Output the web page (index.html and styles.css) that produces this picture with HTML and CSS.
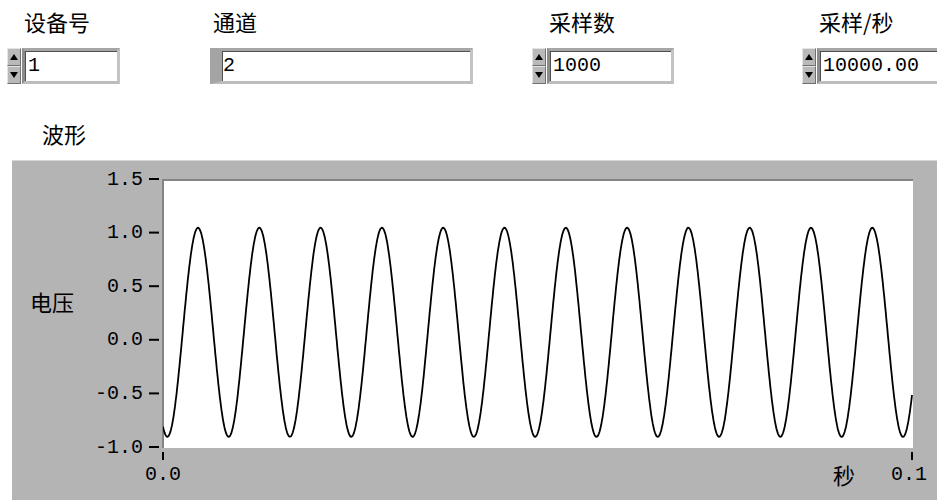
FILE: index.html
```html
<!DOCTYPE html>
<html lang="zh-CN">
<head>
  <meta charset="UTF-8" />
  <title>波形采集</title>
  <link rel="stylesheet" href="styles.css">
</head>
<body>
  <div class="controls">
    <div class="ctl">
      <div class="ctl-label num">设备号</div>
      <div class="ctl-row">
        <div class="spin"><span class="up"></span><span class="down"></span></div>
        <div class="field w-dev">1</div>
      </div>
    </div>
    <div class="ctl">
      <div class="ctl-label">通道</div>
      <div class="ctl-row">
        <div class="field chan">2</div>
      </div>
    </div>
    <div class="ctl">
      <div class="ctl-label num">采样数</div>
      <div class="ctl-row">
        <div class="spin"><span class="up"></span><span class="down"></span></div>
        <div class="field w-count">1000</div>
      </div>
    </div>
    <div class="ctl">
      <div class="ctl-label num">采样/秒</div>
      <div class="ctl-row">
        <div class="spin"><span class="up"></span><span class="down"></span></div>
        <div class="field w-rate">10000.00</div>
      </div>
    </div>
  </div>

  <div class="graph-label">波形</div>
  <div class="graph">
    <svg width="925" height="340" viewBox="0 0 925 340">
      <defs>
        <clipPath id="plot-clip"><rect x="151" y="20" width="750" height="268" /></clipPath>
      </defs>
      <rect class="plot" x="150" y="19" width="751" height="269" />
      <path class="plot-edge" d="M151 288 V20 H901" />

      <g class="ticks">
        <line x1="137" y1="19" x2="147" y2="19" />
        <line x1="137" y1="72.6" x2="147" y2="72.6" />
        <line x1="137" y1="126.2" x2="147" y2="126.2" />
        <line x1="137" y1="179.8" x2="147" y2="179.8" />
        <line x1="137" y1="233.4" x2="147" y2="233.4" />
        <line x1="137" y1="287" x2="147" y2="287" />
        <line x1="151" y1="292" x2="151" y2="300" />
        <line x1="900" y1="292" x2="900" y2="300" />
      </g>
      <g class="num-label y-label">
        <text x="131" y="19">1.5</text>
        <text x="131" y="72.6">1.0</text>
        <text x="131" y="126.2">0.5</text>
        <text x="131" y="179.8">0.0</text>
        <text x="131" y="233.4">-0.5</text>
        <text x="131" y="287">-1.0</text>
      </g>
      <g class="num-label x-label">
        <text x="151" y="314">0.0</text>
        <text x="897" y="314">0.1</text>
      </g>
      <text class="axis-name" x="18" y="141">电压</text>
      <text class="axis-name" x="821" y="314">秒</text>

      <path id="wave" class="wave" clip-path="url(#plot-clip)" d="" />
    </svg>
  </div>

  <script>
    // 0.1 s span, 1000 samples, drawn in plot pixels
    function drawWave() {
      const x0 = 151, x1 = 900;
      const yTop = 19, pxPerVolt = 107.2; // 1.5 V at top
      const period = 61.3, firstPeak = 186;
      const offset = 0.07, amp = 0.975;
      let d = "";
      for (let i = 0; i <= 1000; i++) {
        const x = x0 + (x1 - x0) * i / 1000;
        const v = offset + amp * Math.cos(2 * Math.PI * (x - firstPeak) / period);
        const y = yTop + (1.5 - v) * pxPerVolt;
        d += (i ? " L" : "M") + x.toFixed(1) + " " + y.toFixed(1);
      }
      document.getElementById("wave").setAttribute("d", d);
    }
    drawWave();
  </script>
</body>
</html>
```

FILE: styles.css
```css
body { margin: 0; background: #fff; font-family: "Noto Sans CJK SC", sans-serif; color: #000; }

.controls { display: grid; grid-template-columns: 203px 322px 270px 1fr; padding: 8px 0 0 7px; }
.ctl-label { font-size: 22px; line-height: 26px; height: 26px; margin-bottom: 14px; padding-left: 3px; }
.ctl-label.num { padding-left: 17px; }
.ctl-row { display: flex; }

.spin { width: 14px; height: 36px; display: flex; flex-direction: column; margin-right: 1px; background: #b9b9b9; }
.spin span { flex: 1; display: flex; align-items: center; justify-content: center; border: 1px solid; border-color: #e4e4e4 #707070 #707070 #e4e4e4; }
.spin .up::after { content: ""; border-left: 4px solid transparent; border-right: 4px solid transparent; border-bottom: 6px solid #000; }
.spin .down::after { content: ""; border-left: 4px solid transparent; border-right: 4px solid transparent; border-top: 6px solid #000; }

.field {
  height: 36px; box-sizing: border-box; background: #fff;
  border: 3px solid; border-color: #a6a6a6 #c4c4c4 #bdbdbd #8c8c8c;
  box-shadow: inset 1px 1px 0 #505050;
  font: 20px "Liberation Mono", monospace; line-height: 30px; padding-left: 3px; color: #000;
}
.w-dev { width: 98px; }
.w-count { width: 127px; }
.w-rate { width: 125px; }
.field.chan { width: 263px; border-left: 12px solid #a4a4a4; padding-left: 1px; }

.graph-label { font-size: 22px; line-height: 26px; margin-top: 36px; padding-left: 42px; }
.graph { margin: 14px 0 0 12px; height: 340px; background: #b4b4b4; border-top: 1px solid #d6d6d6; box-sizing: border-box; overflow: hidden; }
.graph svg { display: block; margin-top: -1px; }

.plot { fill: #fff; }
.plot-edge { fill: none; stroke: #848484; stroke-width: 2; }
.ticks line { stroke: #000; stroke-width: 2; }
.num-label { font-family: "Liberation Mono", monospace; font-size: 20px; fill: #000; dominant-baseline: central; }
.y-label { text-anchor: end; }
.x-label { text-anchor: middle; }
.axis-name { font-family: "Noto Sans CJK SC", sans-serif; font-size: 22px; fill: #000; dominant-baseline: central; }
.wave { fill: none; stroke: #000; stroke-width: 1.8; }
```
